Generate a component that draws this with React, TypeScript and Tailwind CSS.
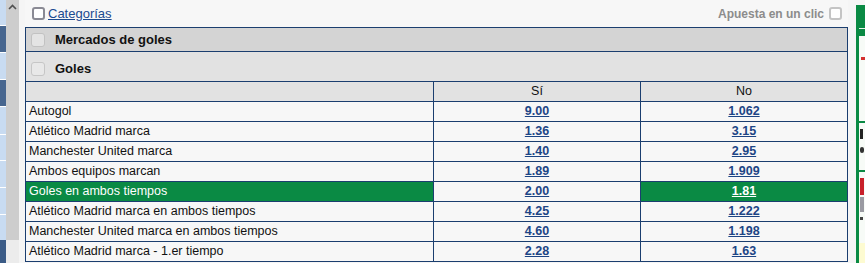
import React from 'react';

type Row = { name: string; si: string; no: string; hot?: boolean };

const rows: Row[] = [
  { name: 'Autogol', si: '9.00', no: '1.062' },
  { name: 'Atlético Madrid marca', si: '1.36', no: '3.15' },
  { name: 'Manchester United marca', si: '1.40', no: '2.95' },
  { name: 'Ambos equipos marcan', si: '1.89', no: '1.909' },
  { name: 'Goles en ambos tiempos', si: '2.00', no: '1.81', hot: true },
  { name: 'Atlético Madrid marca en ambos tiempos', si: '4.25', no: '1.222' },
  { name: 'Manchester United marca en ambos tiempos', si: '4.60', no: '1.198' },
  { name: 'Atlético Madrid marca - 1.er tiempo', si: '2.28', no: '1.63' },
];

function SideStrip() {
  // partially visible list on the far left
  const segs = [
    'bg-[#c8dbf1] h-[26px]',
    'bg-[#47668f] h-[27px]',
    'bg-[#c8dbf1] h-[27px]',
    'bg-[#47668f] h-[27px]',
    'bg-[#c8dbf1] h-[27px]',
    'bg-[#c8dbf1] h-[26px]',
    'bg-[#c8dbf1] h-[27px]',
    'bg-[#c8dbf1] h-[27px]',
    'bg-[#c8dbf1] h-[26px]',
  ];
  return (
    <div className="flex w-[19px] shrink-0 flex-col">
      <div className="flex h-[240px]">
        <div className="flex w-[6px] flex-col gap-px bg-white">
          {segs.map((s, i) => (
            <div key={i} className={s} />
          ))}
        </div>
        <div className="flex w-[13px] justify-center bg-[#cdcdcd] pt-[4px]">
          <svg width="9" height="6" viewBox="0 0 9 6">
            <polyline points="1,5 4.5,1.5 8,5" fill="none" stroke="#505050" strokeWidth="1.6" />
          </svg>
        </div>
      </div>
      <div className="flex flex-1">
        <div className="w-[6px] bg-[#3b5b86]" />
        <div className="flex-1 bg-[#ececec]" />
      </div>
    </div>
  );
}

function RightPanel() {
  return (
    <div className="mt-[5px] flex w-[9px] shrink-0 flex-col overflow-hidden border-l-[3px] border-[#0a8a44] bg-[#f7fbf7]">
      <div className="h-[23px] bg-[#0a8a44]" />
      <div className="h-px bg-[#e8f3ea]" />
      <div className="h-[7px] bg-[#0a8a44]" />
      <div className="h-[85px] pl-[2px] pt-[21px]">
        <div className="h-[3px] w-[4px] bg-[#d43030]" />
      </div>
      <div className="h-[2px] bg-[#0a8a44]" />
      <div className="h-[47px] pl-[1px] pt-[6px]">
        <div className="h-[10px] w-[3px] bg-[#222]" />
        <div className="mt-[8px] h-[6px] w-[4px] rounded-full border-2 border-[#333]" />
      </div>
      <div className="h-[2px] bg-[#0a8a44]" />
      <div className="h-[71px] pl-[1px] pt-[6px]">
        <div className="h-[17px] w-[4px] bg-[#c8202a]" />
        <div className="mt-[2px] h-[15px] w-[4px] bg-[#9a9aa2]" />
        <div className="mt-[5px] h-[3px] w-[3px] bg-[#444]" />
      </div>
      <div className="flex-1 bg-[#fdfbd1]" />
    </div>
  );
}

function Check({ className }: { className: string }) {
  return <span className={'inline-block shrink-0 rounded-[3px] ' + className} />;
}

export default function App() {
  return (
    <div
      className="flex h-[263px] w-[865px] overflow-hidden bg-[#f5f5f5] text-[12.5px] text-[#111]"
      style={{ fontFamily: '"Liberation Sans", Arial, sans-serif' }}
    >
      <SideStrip />
      <div className="ml-[6px] flex w-[823px] shrink-0 flex-col">
        {/* top bar */}
        <div className="flex h-[27px] items-center justify-between bg-[#f7f7f7] pl-[7px] pr-[6px]">
          <div className="flex items-center gap-[3px]">
            <Check className="h-[13px] w-[13px] border-2 border-[#8a8a94] bg-white" />
            <a href="#" className="text-[13px] text-[#1b4a90] underline">
              Categorías
            </a>
          </div>
          <div className="flex items-center gap-[5px]">
            <span className="text-[12px] font-bold text-[#8c8c8c]">Apuesta en un clic</span>
            <Check className="h-[13px] w-[13px] border-2 border-[#c4c4c4] bg-white" />
          </div>
        </div>

        {/* market table */}
        <div className="border-x border-t border-[#1b3e6f]">
          <div className="flex h-[24px] items-center gap-[10px] border-b border-[#1b3e6f] bg-[#d4d4d4] pl-[5px]">
            <Check className="h-[14px] w-[14px] border border-[#c2c2c2] bg-[#e4e4e4]" />
            <span className="text-[13px] font-bold">Mercados de goles</span>
          </div>
          <div className="flex h-[30px] items-center gap-[10px] border-b border-[#1b3e6f] bg-[#e2e2e2] pl-[5px] pt-[5px]">
            <Check className="h-[14px] w-[14px] border border-[#c6c6c6] bg-[#e8e8e8]" />
            <span className="text-[13px] font-bold">Goles</span>
          </div>
          <div className="grid h-[20px] grid-cols-[408px_207px_206px] border-b border-[#1b3e6f] bg-[#e2e2e2]">
            <div className="border-r border-[#1b3e6f]" />
            <div className="flex items-center justify-center border-r border-[#1b3e6f]">Sí</div>
            <div className="flex items-center justify-center">No</div>
          </div>
          {rows.map((r) => (
            <div
              key={r.name}
              className="grid h-[20px] grid-cols-[408px_207px_206px] border-b border-[#1b3e6f] bg-[#f7f7f7]"
            >
              <div
                className={
                  'flex items-center border-r border-[#1b3e6f] pl-[3px] ' +
                  (r.hot ? 'bg-[#0a8a44] text-white' : '')
                }
              >
                {r.name}
              </div>
              <div className="flex items-center justify-center border-r border-[#1b3e6f]">
                <a href="#" className="font-bold text-[#1d4585] underline">
                  {r.si}
                </a>
              </div>
              <div className={'flex items-center justify-center ' + (r.hot ? 'bg-[#0a8a44]' : '')}>
                <a href="#" className={'font-bold underline ' + (r.hot ? 'text-white' : 'text-[#1d4585]')}>
                  {r.no}
                </a>
              </div>
            </div>
          ))}
        </div>
      </div>
      <div className="w-[8px] shrink-0" />
      <RightPanel />
    </div>
  );
}
